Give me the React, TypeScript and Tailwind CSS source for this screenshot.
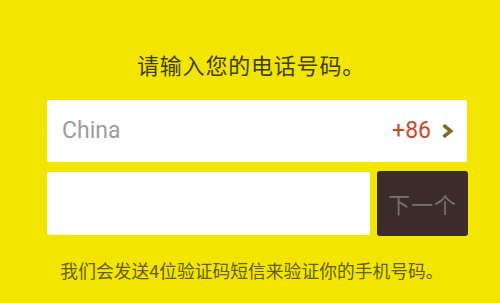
export default function App() {
  return (
    <div
      className="w-[500px] h-[303px] bg-[#f2e600] flex flex-col overflow-hidden"
      style={{ fontFamily: '"Noto Sans CJK SC", "Noto Sans", sans-serif' }}
    >
      <h1 className="mt-[51px] ml-[2px] text-center text-[22px] leading-[26px] text-[#423c0c] tracking-[0.8px]">
        请输入您的电话号码。
      </h1>

      <div className="mt-[23px] ml-[47px] w-[420px] h-[62px] bg-white rounded-[2px] flex items-center pl-[15px] pr-[14px]">
        <span className="text-[23px] text-[#9c9c9c] font-['Roboto',sans-serif]">China</span>
        <span className="ml-auto text-[23px] text-[#c9482c] font-['Roboto',sans-serif]">+86</span>
        <svg className="ml-[11px] w-[11px] h-[14px]" viewBox="0 0 11 14">
          <path d="M1.5 1.2 L8.8 7 L1.5 12.8" fill="none" stroke="#7d6e1e" strokeWidth="3.6" strokeLinejoin="miter" />
        </svg>
      </div>

      <div className="mt-[9px] ml-[47px] w-[421px] h-[65px] flex gap-[7px]">
        <div className="w-[323px] h-[63px] mt-[1px] bg-white rounded-[2px]" />
        <button className="w-[91px] h-[65px] bg-[#3b2b2b] rounded-[3px] text-[22px] text-[#7a706c] tracking-[1px]">
          下一个
        </button>
      </div>

      <p className="mt-[23px] ml-[4px] text-center text-[17.8px] leading-[22px] text-[#665d10]">
        我们会发送4位验证码短信来验证你的手机号码。
      </p>
    </div>
  );
}
